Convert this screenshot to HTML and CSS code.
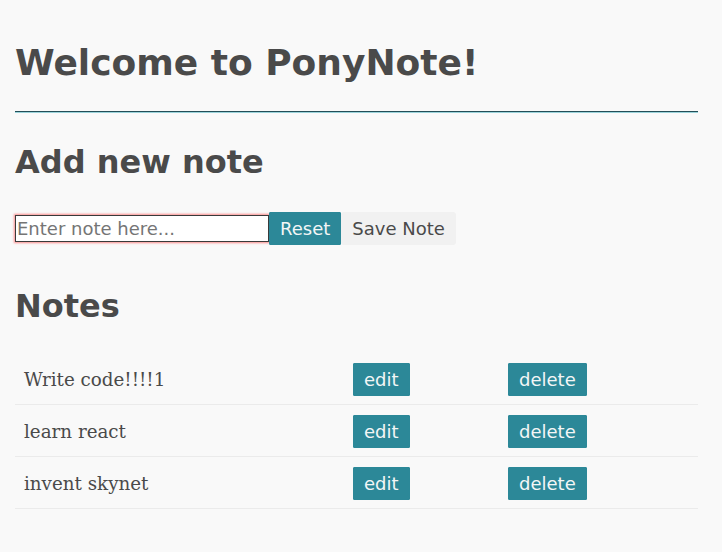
FILE: index.html
```html
<!DOCTYPE html>
<html>
<head>
<meta charset="utf-8">
<title>PonyNote</title>
<link rel="stylesheet" href="styles.css">
</head>
<body>
<h1 class="title">Welcome to PonyNote!</h1>
<hr class="rule">
<h2 class="section">Add new note</h2>
<form class="note-form">
  <input class="note-input" type="text" placeholder="Enter note here..." required>
  <button class="btn" type="reset">Reset</button><button class="btn btn-light" type="submit">Save Note</button>
</form>
<h2 class="section section-notes">Notes</h2>
<table class="notes">
  <colgroup><col class="c1"><col class="c2"><col class="c3"></colgroup>
  <tbody>
    <tr><td class="note-text">Write code!!!!1</td><td><button class="btn btn-row">edit</button></td><td><button class="btn btn-row">delete</button></td></tr>
    <tr><td class="note-text">learn react</td><td><button class="btn btn-row">edit</button></td><td><button class="btn btn-row">delete</button></td></tr>
    <tr><td class="note-text">invent skynet</td><td><button class="btn btn-row">edit</button></td><td><button class="btn btn-row">delete</button></td></tr>
  </tbody>
</table>
</body>
</html>
```
FILE: styles.css
```css
html { background: #f9f9f9; }
body {
  margin: 0;
  padding: 0 24px 40px 15px;
  background: #f9f9f9;
  color: #4a4a4a;
  font-family: "DejaVu Sans", sans-serif;
  font-size: 18px;
}
.title {
  font-size: 36px;
  line-height: 1.2;
  font-weight: bold;
  margin: 41px 0 0;
}
.rule {
  margin: 27px 0 0;
  height: 0;
  border: 0;
  border-top: 1px solid #234e58;
  border-bottom: 1px solid #9bd3da;
}
.section {
  font-size: 32px;
  line-height: 1.2;
  font-weight: bold;
  margin: 30px 0 0;
}
.note-form {
  display: flex;
  align-items: center;
  margin-top: 30px;
}
.note-input {
  box-sizing: border-box;
  width: 254px;
  height: 27px;
  margin: 0;
  padding: 0 1px;
  border: 1px solid #3a3a3a;
  background: #fff;
  box-shadow: 0 0 2px 1px rgba(255, 70, 70, 0.6);
  font-family: "DejaVu Sans", sans-serif;
  font-size: 18px;
  color: #4a4a4a;
}
.note-input::placeholder { color: #757575; }
.btn {
  box-sizing: border-box;
  margin: 0;
  padding: 5px 10px;
  border: 1px solid #2c8898;
  border-radius: 1px;
  background: #2c8898;
  color: #f3f6f6;
  font-family: "DejaVu Sans", sans-serif;
  font-size: 18px;
  line-height: 21px;
  cursor: pointer;
}
.btn-light {
  background: #f1f1f1;
  border-color: #f1f1f1;
  color: #4a4a4a;
  border-radius: 3px;
}
.btn-row { display: block; }
.section-notes { margin-top: 42px; }
.notes {
  width: 683px;
  margin-top: 27px;
  border-collapse: collapse;
  table-layout: fixed;
}
.c1 { width: 330px; }
.c2 { width: 155px; }
.c3 { width: 198px; }
.notes td {
  padding: 10px 8px 8px 8px;
  border-bottom: 1px solid #ebebeb;
  vertical-align: middle;
}
.notes tr:first-child td { padding-top: 11px; }
.notes td.note-text {
  padding-left: 9px;
  font-family: "DejaVu Serif", serif;
  font-size: 18.3px;
}
```
